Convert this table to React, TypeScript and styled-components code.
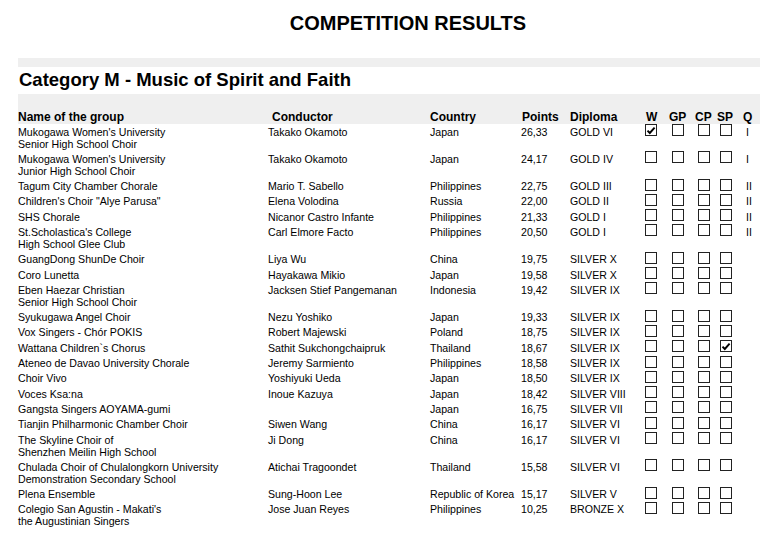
import React from 'react';
import styled, { createGlobalStyle } from 'styled-components';

type Result = {
  name: string[];
  conductor: string;
  country: string;
  points: string;
  diploma: string;
  checked?: 'W' | 'GP' | 'CP' | 'SP';
  q?: string;
};

const results: Result[] = [
  { name: ["Mukogawa Women's University", 'Senior High School Choir'], conductor: 'Takako Okamoto', country: 'Japan', points: '26,33', diploma: 'GOLD VI', checked: 'W', q: 'I' },
  { name: ["Mukogawa Women's University", 'Junior High School Choir'], conductor: 'Takako Okamoto', country: 'Japan', points: '24,17', diploma: 'GOLD IV', q: 'I' },
  { name: ['Tagum City Chamber Chorale'], conductor: 'Mario T. Sabello', country: 'Philippines', points: '22,75', diploma: 'GOLD III', q: 'II' },
  { name: ['Children\'s Choir "Alye Parusa"'], conductor: 'Elena Volodina', country: 'Russia', points: '22,00', diploma: 'GOLD II', q: 'II' },
  { name: ['SHS Chorale'], conductor: 'Nicanor Castro Infante', country: 'Philippines', points: '21,33', diploma: 'GOLD I', q: 'II' },
  { name: ["St.Scholastica's College", 'High School Glee Club'], conductor: 'Carl Elmore Facto', country: 'Philippines', points: '20,50', diploma: 'GOLD I', q: 'II' },
  { name: ['GuangDong ShunDe Choir'], conductor: 'Liya Wu', country: 'China', points: '19,75', diploma: 'SILVER X' },
  { name: ['Coro Lunetta'], conductor: 'Hayakawa Mikio', country: 'Japan', points: '19,58', diploma: 'SILVER X' },
  { name: ['Eben Haezar Christian', 'Senior High School Choir'], conductor: 'Jacksen Stief Pangemanan', country: 'Indonesia', points: '19,42', diploma: 'SILVER IX' },
  { name: ['Syukugawa Angel Choir'], conductor: 'Nezu Yoshiko', country: 'Japan', points: '19,33', diploma: 'SILVER IX' },
  { name: ['Vox Singers - Chór POKIS'], conductor: 'Robert Majewski', country: 'Poland', points: '18,75', diploma: 'SILVER IX' },
  { name: ['Wattana Children`s Chorus'], conductor: 'Sathit Sukchongchaipruk', country: 'Thailand', points: '18,67', diploma: 'SILVER IX', checked: 'SP' },
  { name: ['Ateneo de Davao University Chorale'], conductor: 'Jeremy Sarmiento', country: 'Philippines', points: '18,58', diploma: 'SILVER IX' },
  { name: ['Choir Vivo'], conductor: 'Yoshiyuki Ueda', country: 'Japan', points: '18,50', diploma: 'SILVER IX' },
  { name: ['Voces Ksa:na'], conductor: 'Inoue Kazuya', country: 'Japan', points: '18,42', diploma: 'SILVER VIII' },
  { name: ['Gangsta Singers AOYAMA-gumi'], conductor: '', country: 'Japan', points: '16,75', diploma: 'SILVER VII' },
  { name: ['Tianjin Philharmonic Chamber Choir'], conductor: 'Siwen Wang', country: 'China', points: '16,17', diploma: 'SILVER VI' },
  { name: ['The Skyline Choir of', 'Shenzhen Meilin High School'], conductor: 'Ji Dong', country: 'China', points: '16,17', diploma: 'SILVER VI' },
  { name: ['Chulada Choir of Chulalongkorn University', 'Demonstration Secondary School'], conductor: 'Atichai Tragoondet', country: 'Thailand', points: '15,58', diploma: 'SILVER VI' },
  { name: ['Plena Ensemble'], conductor: 'Sung-Hoon Lee', country: 'Republic of Korea', points: '15,17', diploma: 'SILVER V' },
  { name: ["Colegio San Agustin - Makati's", 'the Augustinian Singers'], conductor: 'Jose Juan Reyes', country: 'Philippines', points: '10,25', diploma: 'BRONZE X' },
];

const awards: Array<'W' | 'GP' | 'CP' | 'SP'> = ['W', 'GP', 'CP', 'SP'];

const headCols = '254px 158px 92px 48px 76px 23px 26px 22px 26px 1fr';
const bodyCols = '250px 162px 91px 49px 75px 27px 26px 22px 25px 1fr';

const GlobalStyle = createGlobalStyle`
  html, body {
    margin: 0;
    padding: 0;
    background: #ffffff;
    overflow: hidden;
  }
  body {
    font-family: 'Liberation Sans', Arial, sans-serif;
    color: #000;
  }
`;

const Page = styled.div`
  width: 780px;
  margin-left: 18px;
`;

const Title = styled.h1`
  margin: 0;
  padding-top: 11px;
  height: 58px;
  box-sizing: border-box;
  font-size: 20px;
  line-height: 24px;
  font-weight: bold;
  text-align: center;
`;

const Band = styled.div`
  height: 9px;
  background: #efefef;
`;

const Category = styled.h2`
  margin: 0;
  padding: 1.5px 0 3.5px 1px;
  font-size: 18.5px;
  line-height: 22px;
  font-weight: bold;
`;

const Grid = styled.div<{ $cols: string }>`
  display: grid;
  grid-template-columns: ${(p) => p.$cols};
`;

const HeaderRow = styled(Grid)`
  height: 30px;
  box-sizing: border-box;
  padding-top: 16px;
  background: #efefef;
  font-size: 12px;
  line-height: 14px;
  font-weight: bold;
`;

const Row = styled(Grid)`
  padding: 1.5px 0 1.8px;
  font-size: 10.6px;
  line-height: 12px;
`;

const Cell = styled.div`
  white-space: nowrap;
`;

const QCell = styled.div`
  padding-left: 1px;
  font-size: 10.6px;
`;

const Box = styled.div`
  width: 12px;
  height: 12px;
  margin-top: -1.5px;
  box-sizing: border-box;
  border: 1.2px solid #222;
  display: flex;
  align-items: center;
  justify-content: center;
`;

const Check = () => (
  <svg width="10" height="9" viewBox="0 0 10 9">
    <polyline points="1.5,4.6 3.8,7 8.6,1.6" fill="none" stroke="#000" strokeWidth="1.9" />
  </svg>
);

const App = () => {
  return (
    <Page>
      <GlobalStyle />
      <Title>COMPETITION RESULTS</Title>
      <Band />
      <Category>Category M - Music of Spirit and Faith</Category>
      <HeaderRow $cols={headCols}>
        <Cell>Name of the group</Cell>
        <Cell>Conductor</Cell>
        <Cell>Country</Cell>
        <Cell>Points</Cell>
        <Cell>Diploma</Cell>
        <Cell>W</Cell>
        <Cell>GP</Cell>
        <Cell>CP</Cell>
        <Cell>SP</Cell>
        <Cell>Q</Cell>
      </HeaderRow>
      {results.map((r, index) => (
        <Row $cols={bodyCols} key={`result-${index}`}>
          <Cell>
            {r.name.map((line, i) => (
              <div key={i}>{line}</div>
            ))}
          </Cell>
          <Cell>{r.conductor}</Cell>
          <Cell>{r.country}</Cell>
          <Cell>{r.points}</Cell>
          <Cell>{r.diploma}</Cell>
          {awards.map((a) => (
            <Cell key={a}>
              <Box>{r.checked === a && <Check />}</Box>
            </Cell>
          ))}
          <QCell>{r.q}</QCell>
        </Row>
      ))}
    </Page>
  );
};

export default App;
